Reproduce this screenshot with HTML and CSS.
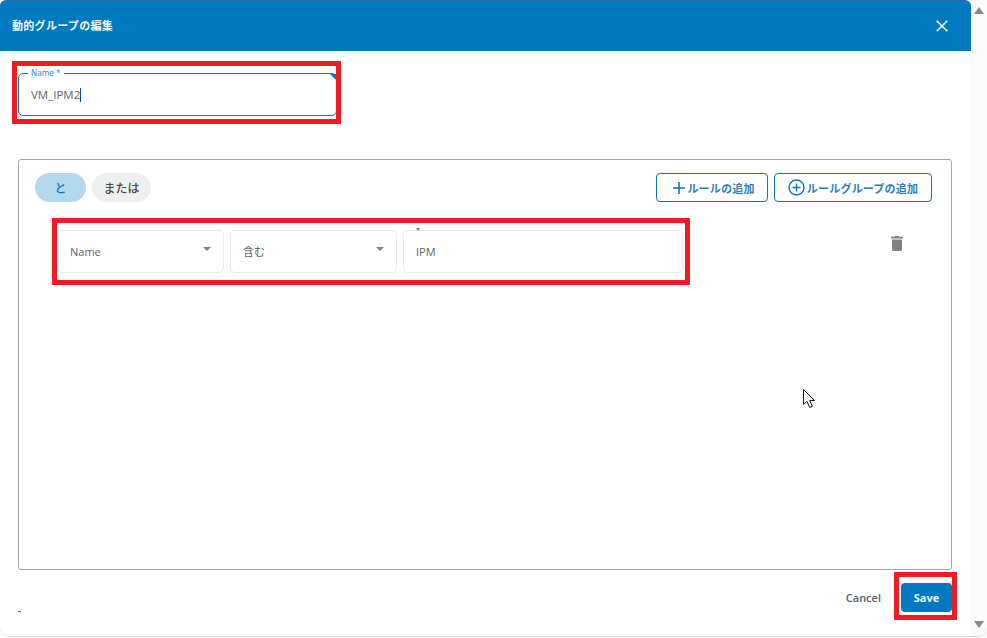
FILE: index.html
```html
<!DOCTYPE html>
<html lang="ja">
<head>
<meta charset="utf-8">
<title>動的グループの編集</title>
<link rel="stylesheet" href="styles.css">
</head>
<body>
<div class="window">
  <div class="dialog">
    <header class="head">
      <h1 class="title">動的グループの編集</h1>
      <svg class="close" width="12" height="12" viewBox="0 0 12 12"><path d="M.7.7l10.6 10.6M11.3.7L.7 11.3" stroke="#fff" stroke-width="1.5" fill="none"/></svg>
    </header>
    <div class="body">
      <div class="name-field">
        <span class="name-label">Name *</span>
        <span class="name-value">VM_IPM2</span><span class="caret"></span>
        <span class="corner"></span>
      </div>
      <section class="group">
        <div class="group-top">
          <div class="chips">
            <span class="chip chip-on">と</span>
            <span class="chip chip-off">または</span>
          </div>
          <div class="actions">
            <button class="btn btn-rule"><svg width="12" height="12" viewBox="0 0 12 12"><path d="M6 0v12M0 6h12" stroke="#0e76b0" stroke-width="1.6" fill="none"/></svg>ルールの追加</button>
            <button class="btn btn-group"><svg width="17" height="17" viewBox="0 0 17 17"><circle cx="8.500" cy="8.500" r="7.500" stroke="#0e76b0" stroke-width="1.400" fill="none"/><path d="M8.500 4.500v8M4.500 8.500h8" stroke="#0e76b0" stroke-width="1.400" fill="none"/></svg>ルールグループの追加</button>
          </div>
        </div>
        <div class="rule">
          <div class="cell cell-select"><span>Name</span><i class="arrow"></i></div>
          <div class="cell cell-select"><span class="cell-ja">含む</span><i class="arrow"></i></div>
          <div class="cell cell-input"><span>IPM</span><i class="mini-arrow"></i></div>
          <svg class="trash" width="12" height="15" viewBox="0 0 12 15"><path d="M4 0h4l.6.8H12v1.700H0V.8h3.400zM1 3.500h10V13.500A1.500 1.500 0 0 1 9.500 15h-7A1.500 1.500 0 0 1 1 13.500z" fill="#7b8288"/></svg>
        </div>
      </section>
      <footer class="foot">
        <span class="dash"></span>
        <span class="cancel">Cancel</span>
        <button class="save">Save</button>
      </footer>
    </div>
  </div>
  <aside class="scrollbar">
    <i class="sb-up"></i>
    <i class="sb-down"></i>
  </aside>
</div>
<div class="mark mark-name"></div>
<div class="mark mark-rule"></div>
<div class="mark mark-save"></div>
<svg class="pointer" width="13" height="20" viewBox="0 0 13 20"><path d="M.5.500V15.500L4 12.300 6.700 18.500 9.300 17.300 6.700 11.500H11.500z" fill="#fff" stroke="#111" stroke-width="1"/></svg>
</body>
</html>
```
FILE: styles.css
```css
* { box-sizing: border-box; }
html, body { margin: 0; height: 100%; }
body {
  background: #fff;
  font-family: "Open Sans", "Noto Sans CJK JP", sans-serif;
  overflow: hidden;
  position: relative;
}
.window {
  display: flex;
  width: 987px;
  height: 637px;
  border-bottom: 1px solid #d6d6d6;
  border-radius: 0 0 10px 10px;
  overflow: hidden;
}
.dialog { width: 971px; display: flex; flex-direction: column; }
.head {
  height: 51px;
  flex: none;
  background: #0079c1;
  border-top: 1px solid #2a6f9f;
  border-radius: 6px 6px 0 0;
  display: flex;
  align-items: center;
  justify-content: space-between;
  padding: 0 23px 0 12px;
}
.title {
  margin: 0 0 2px;
  font-size: 11px;
  font-weight: 700;
  letter-spacing: .3px;
  color: #f2f8fc;
}
.close { display: block; }
.body { flex: 1; padding: 22px 19px 0 18px; display: flex; flex-direction: column; }
.name-field {
  position: relative;
  width: 319px;
  height: 43px;
  border: 1px solid #0e76b0;
  border-radius: 5px;
  padding: 13px 0 0 12px;
  font-size: 11.500px;
  line-height: 16px;
  color: #5d6367;
  flex: none;
}
.name-label {
  position: absolute;
  left: 9px;
  top: -6px;
  padding: 0 3px;
  background: #fff;
  font-size: 8.200px;
  line-height: 9px;
  color: #2f88bd;
}
.caret {
  display: inline-block;
  width: 1px;
  height: 14px;
  background: #0e4f7a;
  vertical-align: -3px;
}
.corner {
  position: absolute;
  right: 0;
  top: 0;
  width: 0;
  height: 0;
  border-top: 6px solid #0e76b0;
  border-left: 6px solid transparent;
}
.group {
  margin-top: 43px;
  height: 411px;
  flex: none;
  border: 1px solid #a4a8aa;
  border-radius: 3px;
  padding: 13px 19px 0 16px;
}
.group-top { display: flex; justify-content: space-between; }
.chips { display: flex; gap: 6px; }
.chip {
  height: 29px;
  border-radius: 15px;
  display: flex;
  align-items: center;
  justify-content: center;
  font-size: 12px;
  font-weight: 500;
}
.chip-on { width: 51px; background: #b3d7ec; color: #0e76b0; }
.chip-off { width: 59px; background: #eef0f0; color: #44494d; }
.actions { display: flex; gap: 6px; }
.btn {
  height: 29px;
  background: #fff;
  border: 1px solid #0e76b0;
  border-radius: 4px;
  color: #2c7fb2;
  font: 700 11px "Open Sans", "Noto Sans CJK JP", sans-serif;
  letter-spacing: .2px;
  display: flex;
  align-items: center;
  justify-content: center;
  padding: 0;
}
.btn-rule { width: 112px; gap: 2px; padding-left: 4px; }
.btn-group { width: 158px; gap: 2px; }
.rule {
  display: flex;
  gap: 6px;
  margin: 28px 0 0 22px;
  position: relative;
}
.cell {
  height: 43px;
  border: 1px solid #e8e9ea;
  border-radius: 5px;
  padding: 0 0 0 12px;
  display: flex;
  align-items: center;
  font-size: 11px;
  color: #5d6367;
  position: relative;
}
.cell-ja { margin-top: -1px; }
.cell-select { width: 167px; }
.cell-input { width: 280px; }
.arrow {
  position: absolute;
  right: 12px;
  top: 16px;
  border-top: 4px solid #7b8288;
  border-left: 4px solid transparent;
  border-right: 4px solid transparent;
}
.mini-arrow {
  position: absolute;
  left: 12px;
  top: -3px;
  border-top: 3px solid #7b8288;
  border-left: 2.500px solid transparent;
  border-right: 2.500px solid transparent;
}
.trash { position: absolute; left: 834px; top: 6px; }
.foot {
  flex: 1;
  display: flex;
  align-items: flex-start;
  justify-content: flex-end;
  padding-top: 13px;
  position: relative;
}
.dash {
  position: absolute;
  left: 0;
  top: 41px;
  width: 3px;
  height: 1px;
  background: #666;
}
.cancel {
  font-size: 11px;
  font-weight: 600;
  color: #5a6064;
  line-height: 29px;
  margin-right: 20px;
}
.save {
  width: 51px;
  height: 29px;
  border: 0;
  border-radius: 4px;
  background: #0079c1;
  color: #f2f8fc;
  font: 700 11px "Open Sans", sans-serif;
  padding: 0;
}
.scrollbar {
  width: 16px;
  background: #fafafa;
  position: relative;
}
.sb-up, .sb-down {
  position: absolute;
  left: 3px;
  border-left: 5px solid transparent;
  border-right: 5px solid transparent;
}
.sb-up { top: 7px; border-bottom: 7px solid #8a8a8a; }
.sb-down { bottom: 8px; border-top: 7px solid #8a8a8a; }
.mark {
  position: absolute;
  border: 5px solid #ee1c25;
}
.mark-name { left: 12px; top: 61px; width: 329px; height: 63px; }
.mark-rule { left: 52px; top: 218px; width: 638px; height: 67px; }
.mark-save { left: 894px; top: 572px; width: 63px; height: 48px; }
.pointer { position: absolute; left: 803px; top: 389px; }
```
